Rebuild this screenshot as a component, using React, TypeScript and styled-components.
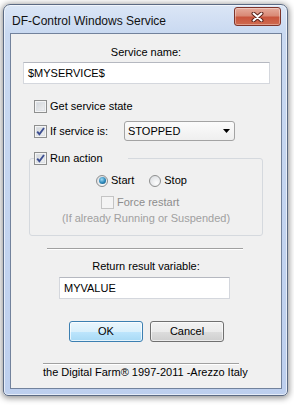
import React from 'react';
import styled, { createGlobalStyle } from 'styled-components';

const GlobalStyle = createGlobalStyle`
  html, body {
    margin: 0;
    padding: 0;
    background: #fff;
  }
  body {
    width: 294px;
    height: 405px;
    overflow: hidden;
    font-family: "Liberation Sans", Arial, sans-serif;
    font-size: 11px;
    color: #000;
  }
`;

const Check: React.FunctionComponent<{ checked?: boolean; disabled?: boolean }> = ({
  checked,
  disabled
}) => (
  <CheckBox $disabled={disabled}>
    {checked && (
      <svg width="9" height="9" viewBox="0 0 9 9">
        <path d="M1.2 4.6 L3.4 7.2 L8 1" fill="none" stroke="#3d4f92" strokeWidth="1.9" />
      </svg>
    )}
  </CheckBox>
);

const Radio: React.FunctionComponent<{ checked?: boolean }> = ({ checked }) => (
  <RadioCircle>{checked && <RadioDot />}</RadioCircle>
);

export default function App() {
  return (
    <>
      <GlobalStyle />
      <Stage>
        <Window>
          <TitleBar>
            <Title>DF-Control Windows Service</Title>
            <CloseButton>
              <svg width="13" height="10" viewBox="0 0 13 10">
                <path d="M2.5 1.5 L10.5 8.5 M10.5 1.5 L2.5 8.5" stroke="#5a2219" strokeWidth="4" strokeLinecap="round" />
                <path d="M2.5 1.5 L10.5 8.5 M10.5 1.5 L2.5 8.5" stroke="#fff" strokeWidth="2" strokeLinecap="round" />
              </svg>
            </CloseButton>
          </TitleBar>
          <Client>
            <Caption $top={12}>Service name:</Caption>
            <TextField $top={3} $left={12} $width={247}>$MYSERVICE$</TextField>

            <Row $top={16} $left={23}>
              <Check />
              <span>Get service state</span>
            </Row>

            <Row $top={8} $left={23} $height={20}>
              <Check checked />
              <FixedLabel>If service is:</FixedLabel>
              <Select>
                <span>STOPPED</span>
                <svg width="7" height="4" viewBox="0 0 7 4">
                  <path d="M0 0 H7 L3.5 4 Z" fill="#000" />
                </svg>
              </Select>
            </Row>

            <Group>
              <GroupLegend>
                <LegendInner>
                  <Check checked />
                  <span>Run action</span>
                </LegendInner>
              </GroupLegend>
              <Row $top={9} $left={66}>
                <RadioItem>
                  <Radio checked />
                  <span>Start</span>
                </RadioItem>
                <RadioItem $gapBefore={12}>
                  <Radio />
                  <span>Stop</span>
                </RadioItem>
              </Row>
              <Row $top={9} $left={71} $muted>
                <Check disabled />
                <span>Force restart</span>
              </Row>
              <Note>(If already Running or Suspended)</Note>
            </Group>

            <Separator $top={12} $left={36} />
            <Caption $top={10}>Return result variable:</Caption>
            <TextField $top={4} $left={48} $width={171}>MYVALUE</TextField>

            <ButtonRow>
              <Button $primary>OK</Button>
              <Button>Cancel</Button>
            </ButtonRow>

            <Footer>
              <Separator $top={0} $left={0} />
              <FooterText>the Digital Farm® 1997-2011 -Arezzo Italy</FooterText>
            </Footer>
          </Client>
        </Window>
      </Stage>
    </>
  );
}

const Stage = styled.div`
  padding: 4px 0 0 3px;
`;

const Window = styled.div`
  width: 285px;
  box-sizing: border-box;
  border: 1px solid #5b6a83;
  border-radius: 7px 7px 5px 5px;
  background: linear-gradient(#dbe6f6, #c9d9f1 28px, #bdcfee);
  box-shadow: 0 1px 6px 1px rgba(0, 0, 0, 0.45), inset 0 0 0 1px rgba(255, 255, 255, 0.6);
  padding: 0 5px 6px 6px;
`;

const TitleBar = styled.div`
  height: 28px;
  display: flex;
  justify-content: space-between;
  align-items: flex-start;
`;

const Title = styled.div`
  margin: 9px 0 0 2px;
  font-size: 12px;
  line-height: 14px;
  color: #111;
`;

const CloseButton = styled.div`
  margin: 2px 1px 0 0;
  width: 47px;
  height: 19px;
  box-sizing: border-box;
  border: 1px solid #7e342a;
  border-radius: 3px;
  background: linear-gradient(#e6ab9c, #d98a76 45%, #c9553d 55%, #cf6a4f);
  box-shadow: inset 0 0 0 1px rgba(255, 255, 255, 0.35);
  display: flex;
  align-items: center;
  justify-content: center;
`;

const Client = styled.div`
  border: 1px solid #72829c;
  background: #f0f0f0;
  display: flex;
  flex-direction: column;
  align-items: flex-start;
  padding: 0 0 9px;
`;

const Caption = styled.div<{ $top: number }>`
  margin-top: ${(p) => p.$top}px;
  align-self: center;
  line-height: 13px;
`;

const TextField = styled.div<{ $top: number; $left: number; $width: number }>`
  margin: ${(p) => p.$top}px 0 0 ${(p) => p.$left}px;
  width: ${(p) => p.$width}px;
  height: 22px;
  box-sizing: border-box;
  border: 1px solid #d4d7dd;
  border-top-color: #b5b8c0;
  background: #fff;
  padding: 0 4px;
  display: flex;
  align-items: center;
`;

const Row = styled.div<{ $top: number; $left: number; $height?: number; $muted?: boolean }>`
  margin: ${(p) => p.$top}px 0 0 ${(p) => p.$left}px;
  height: ${(p) => p.$height ?? 13}px;
  display: flex;
  align-items: center;
  gap: 3px;
  line-height: 13px;
  color: ${(p) => (p.$muted ? '#8d8d8d' : '#000')};
`;

const CheckBox = styled.span<{ $disabled?: boolean }>`
  flex: none;
  width: 13px;
  height: 13px;
  box-sizing: border-box;
  border: 1px solid ${(p) => (p.$disabled ? '#c4c4c4' : '#8e8f8f')};
  background: ${(p) =>
    p.$disabled ? '#f4f4f4' : 'linear-gradient(135deg, #cdd1d6, #f5f5f5)'};
  box-shadow: ${(p) =>
    p.$disabled ? 'none' : 'inset 0 0 0 1px #f4f4f4, inset 0 0 0 2px #dde1e6'};
  display: inline-flex;
  align-items: center;
  justify-content: center;
`;

const FixedLabel = styled.span`
  width: 71px;
`;

const Select = styled.div`
  width: 111px;
  height: 20px;
  box-sizing: border-box;
  border: 1px solid #a3a3a3;
  border-radius: 3px;
  background: linear-gradient(#fbfbfb, #efefef);
  padding: 0 4px 0 3px;
  display: flex;
  align-items: center;
  justify-content: space-between;
`;

const Group = styled.fieldset`
  margin: 11px 0 0 18px;
  width: 234px;
  box-sizing: border-box;
  border: 1px solid #d5d9de;
  border-radius: 3px;
  padding: 0 0 10px;
  min-width: 0;
`;

const GroupLegend = styled.legend`
  margin-left: 4px;
  padding: 0 25px 0 0;
  line-height: 13px;
`;

const LegendInner = styled.span`
  display: flex;
  align-items: center;
  gap: 3px;
  height: 13px;
`;

const RadioItem = styled.div<{ $gapBefore?: number }>`
  display: flex;
  align-items: center;
  gap: 3px;
  margin-left: ${(p) => p.$gapBefore ?? 0}px;
`;

const RadioCircle = styled.span`
  flex: none;
  width: 12px;
  height: 12px;
  box-sizing: border-box;
  border-radius: 50%;
  border: 1px solid #8e8f8f;
  background: radial-gradient(circle at 65% 70%, #fdfdfd, #d6d9dd);
  display: inline-flex;
  align-items: center;
  justify-content: center;
`;

const RadioDot = styled.span`
  width: 7px;
  height: 7px;
  border-radius: 50%;
  background: radial-gradient(circle at 40% 35%, #9fdcf7, #2b86b8 55%, #17506f);
`;

const Note = styled.div`
  margin-top: 3px;
  text-align: center;
  line-height: 13px;
  color: #a0a0a0;
`;

const Separator = styled.div<{ $top: number; $left: number }>`
  margin: ${(p) => p.$top}px 0 0 ${(p) => p.$left}px;
  width: 196px;
  height: 0;
  border-top: 1px solid #a0a0a0;
  border-bottom: 1px solid #fff;
`;

const ButtonRow = styled.div`
  margin: 22px 0 0 58px;
  display: flex;
  gap: 7px;
`;

const Button = styled.div<{ $primary?: boolean }>`
  width: 74px;
  height: 21px;
  box-sizing: border-box;
  border: 1px solid ${(p) => (p.$primary ? '#3c7fb1' : '#707070')};
  border-radius: 3px;
  background: ${(p) =>
    p.$primary
      ? 'linear-gradient(#eaf6fd, #d9f0fc 50%, #bee6fd 50%, #a7d9f5)'
      : 'linear-gradient(#f2f2f2, #ebebeb 50%, #dddddd 50%, #cfcfcf)'};
  box-shadow: inset 0 0 0 1px ${(p) => (p.$primary ? 'rgba(255,255,255,0.7)' : 'rgba(255,255,255,0.6)')};
  display: flex;
  align-items: center;
  justify-content: center;
  line-height: 13px;
`;

const Footer = styled.div`
  margin: 21px 0 0 32px;
`;

const FooterText = styled.div`
  margin-top: 1px;
  line-height: 13px;
  white-space: nowrap;
`;
